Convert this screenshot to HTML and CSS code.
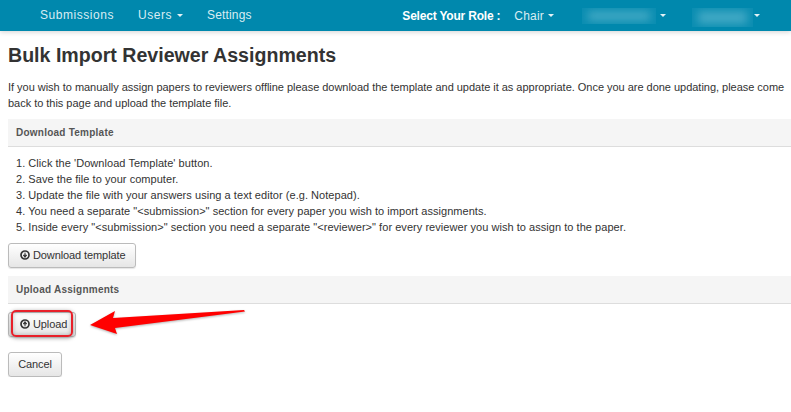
FILE: index.html
```html
<!DOCTYPE html>
<html lang="en">
<head>
<meta charset="UTF-8">
<meta name="viewport" content="width=device-width, initial-scale=1.0">
<title>Bulk Import Reviewer Assignments</title>
<link rel="stylesheet" href="styles.css">
</head>
<body>
    <nav class="navbar">
        <ul class="nav-left">
            <li>Submissions</li>
            <li>Users <span class="caret"></span></li>
            <li class="nav-settings">Settings</li>
        </ul>
        <div class="nav-right">
            <span class="role-label">Select Your Role :</span>
            <span class="nav-item role">Chair <span class="caret"></span></span>
            <span class="nav-item conf"><span class="blurred blurred-wide"></span><span class="caret"></span></span>
            <span class="nav-item user"><span class="blurred blurred-narrow"></span><span class="caret"></span></span>
        </div>
    </nav>

    <main class="content">
        <h1>Bulk Import Reviewer Assignments</h1>
        <p class="intro">If you wish to manually assign papers to reviewers offline please download the template and update it as appropriate. Once you are done updating, please come back to this page and upload the template file.</p>

        <h2 class="section-head">Download Template</h2>
        <ol class="steps">
            <li>1. Click the 'Download Template' button.</li>
            <li>2. Save the file to your computer.</li>
            <li>3. Update the file with your answers using a text editor (e.g. Notepad).</li>
            <li>4. You need a separate "&lt;submission&gt;" section for every paper you wish to import assignments.</li>
            <li>5. Inside every "&lt;submission&gt;" section you need a separate "&lt;reviewer&gt;" for every reviewer you wish to assign to the paper.</li>
        </ol>
        <button class="btn" type="button">
            <svg class="btn-icon" viewBox="0 0 10 10"><circle cx="5" cy="5" r="4"/><path d="M5 2.6v3M3.4 5.2 5 7.4l1.6-2.2z"/></svg>
            Download template
        </button>

        <h2 class="section-head upload-head">Upload Assignments</h2>
        <div class="upload-row">
            <button class="btn" type="button">
                <svg class="btn-icon" viewBox="0 0 10 10"><circle cx="5" cy="5" r="4"/><path d="M5 7.4v-3M3.4 4.8 5 2.6l1.6 2.2z"/></svg>
                Upload
            </button>
        </div>
        <button class="btn btn-cancel" type="button">Cancel</button>
    </main>

    <!-- callout drawn on top of the screenshot -->
    <div class="callout-box"></div>
    <svg class="callout-arrow" viewBox="0 0 170 40" width="170" height="40">
        <path d="M0 16 L25 2 L23 9 L154 1 L155 2.5 L25 19 L27 25 Z"/>
    </svg>
</body>
</html>
```

FILE: styles.css
```css
body {
    font-family: "Liberation Sans", Arial, sans-serif;
    font-size: 11px;
    line-height: 16px;
    margin: 0;
    padding: 0;
    color: #333;
    background-color: #fff;
    overflow: hidden;
}

.navbar {
    display: flex;
    justify-content: space-between;
    height: 31px;
    padding: 0 31px 0 40px;
    background-color: #0088ad;
    color: #d9edf3;
    box-shadow: 0 1px 5px rgba(0, 0, 0, 0.18);
    font-size: 12px;
    letter-spacing: 0.55px;
    line-height: 30px;
}

.nav-left {
    display: flex;
    gap: 24px;
    list-style: none;
    margin: 0;
    padding: 0;
}

.nav-settings {
    letter-spacing: 0.15px;
}

.nav-right {
    display: flex;
    align-items: center;
}

.role-label {
    color: #fff;
    font-weight: bold;
    letter-spacing: -0.2px;
    margin-right: 14px;
}

.nav-item {
    display: flex;
    align-items: center;
    gap: 3px;
    letter-spacing: 0.2px;
}

.conf {
    margin-left: 28px;
    gap: 3px;
}

.user {
    margin-left: 26px;
    gap: 0;
}

.blurred {
    display: block;
    position: relative;
    height: 16px;
    overflow: hidden;
    background-color: #0a8db1;
}

.blurred::before {
    content: "";
    position: absolute;
    inset: 3px 6px;
    background-color: #40a8c4;
    filter: blur(4px);
}

.blurred-wide {
    width: 74px;
}

.blurred-narrow {
    width: 61px;
    height: 19px;
    margin-top: 3px;
}

.caret {
    display: inline-block;
    width: 0;
    height: 0;
    margin-left: 1px;
    vertical-align: middle;
    border-top: 3px solid #e3f2f6;
    border-left: 3px solid transparent;
    border-right: 3px solid transparent;
}

.content {
    padding: 0 8px;
}

h1 {
    font-size: 19.6px;
    line-height: 24px;
    margin: 12px 0 0;
    color: #333;
}

.intro {
    margin: 12px -8px 0 0;
    letter-spacing: -0.025px;
}

.section-head {
    font-size: 10px;
    letter-spacing: 0.24px;
    line-height: 16px;
    font-weight: bold;
    color: #555;
    margin: 8px -8px 0 0;
    padding: 6px 8px 5px;
    height: 16px;
    box-sizing: content-box;
    background-color: #f5f5f5;
    border-bottom: 1px solid #ddd;
}

.steps {
    list-style: none;
    margin: 8px 0 8px;
    padding: 0 8px;
    letter-spacing: 0.045px;
}

.btn {
    display: inline-flex;
    align-items: center;
    gap: 3px;
    height: 25px;
    padding: 0 10px 2px 11px;
    font-family: inherit;
    font-size: 11px;
    letter-spacing: -0.1px;
    color: #333;
    border: 1px solid #bbb;
    border-radius: 3px;
    background: linear-gradient(#fff, #e6e6e6);
    box-shadow: 0 1px 1px rgba(0, 0, 0, 0.1);
}

.btn-icon {
    width: 10px;
    height: 10px;
    fill: #333;
    stroke: #333;
    stroke-width: 1;
}

.btn-icon circle {
    fill: none;
    stroke-width: 1.7;
}

.upload-row {
    margin: 8px 0 15px;
}

.upload-row .btn {
    padding-right: 8px;
}

.upload-head {
    margin-top: 8px;
}

.btn-cancel {
    display: block;
    width: 54px;
    padding: 0 0 2px;
}

.callout-box {
    position: absolute;
    left: 11px;
    top: 310px;
    width: 58px;
    height: 23px;
    border: 2px solid #e8202a;
    border-radius: 5px;
    box-shadow: 0 1px 4px rgba(0, 0, 0, 0.4), inset 0 0 4px rgba(0, 0, 0, 0.25);
}

.callout-arrow {
    position: absolute;
    left: 90px;
    top: 309px;
    filter: drop-shadow(0 1px 1px rgba(0, 0, 0, 0.3));
}

.callout-arrow path {
    fill: #f00;
}
```
